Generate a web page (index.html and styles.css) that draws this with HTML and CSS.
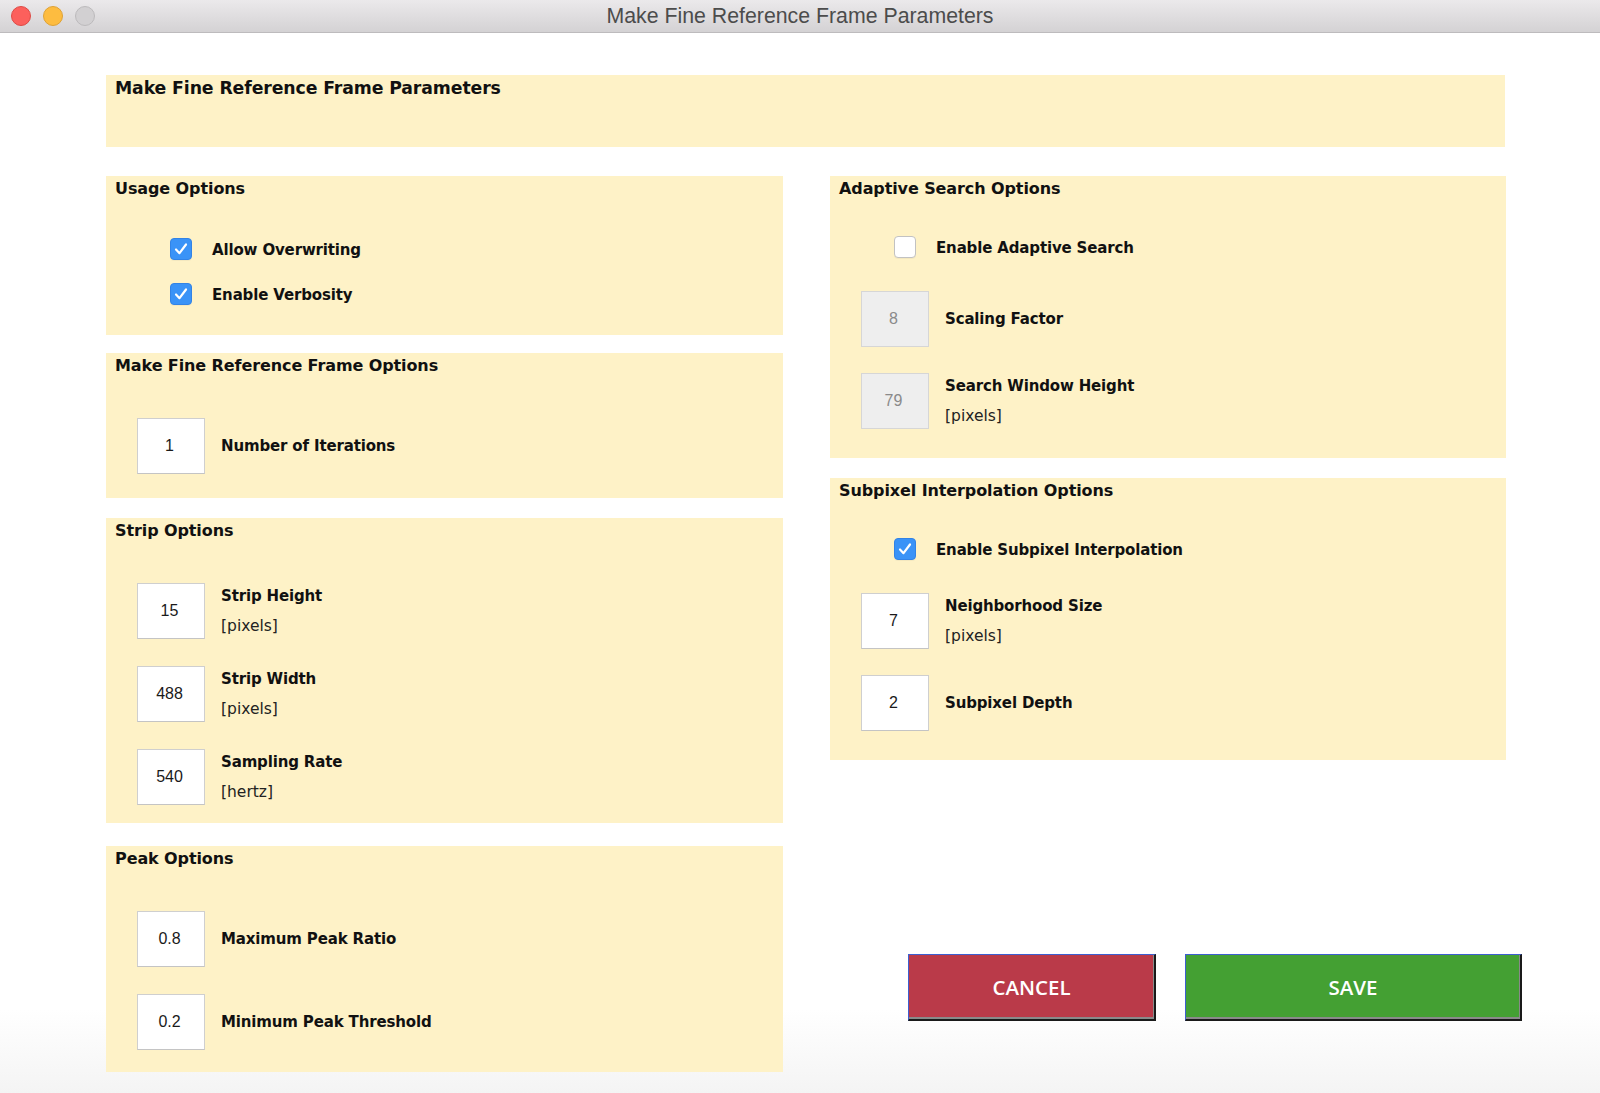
FILE: index.html
```html
<!DOCTYPE html>
<html lang="en">
<head>
<meta charset="utf-8">
<title>Make Fine Reference Frame Parameters</title>
<link rel="stylesheet" href="styles.css">
</head>
<body>
<div class="window">
  <div class="titlebar">
    <div class="lights">
      <span class="light light-red"></span>
      <span class="light light-yellow"></span>
      <span class="light light-gray"></span>
    </div>
    <div class="window-title">Make Fine Reference Frame Parameters</div>
  </div>

  <div class="content">
    <div class="panel panel-header">
      <div class="panel-title">Make Fine Reference Frame Parameters</div>
    </div>

    <div class="columns">
      <div class="col">
        <div class="panel panel-usage">
          <div class="panel-title">Usage Options</div>
          <div class="panel-body body-checks">
            <label class="check-row">
              <span class="checkbox checked"><svg viewBox="0 0 22 22" width="22" height="22"><path d="M6 11.5 L9.5 15.2 L16 6.5" fill="none" stroke="#fff" stroke-width="2.2" stroke-linecap="round" stroke-linejoin="round"/></svg></span>
              <span class="label">Allow Overwriting</span>
            </label>
            <label class="check-row">
              <span class="checkbox checked"><svg viewBox="0 0 22 22" width="22" height="22"><path d="M6 11.5 L9.5 15.2 L16 6.5" fill="none" stroke="#fff" stroke-width="2.2" stroke-linecap="round" stroke-linejoin="round"/></svg></span>
              <span class="label">Enable Verbosity</span>
            </label>
          </div>
        </div>

        <div class="panel panel-mfr">
          <div class="panel-title">Make Fine Reference Frame Options</div>
          <div class="panel-body body-fields">
            <div class="field-row">
              <div class="field">1</div>
              <div class="field-label"><span class="label">Number of Iterations</span></div>
            </div>
          </div>
        </div>

        <div class="panel panel-strip">
          <div class="panel-title">Strip Options</div>
          <div class="panel-body body-fields">
            <div class="field-row">
              <div class="field">15</div>
              <div class="field-label"><span class="label">Strip Height</span><span class="unit">[pixels]</span></div>
            </div>
            <div class="field-row">
              <div class="field">488</div>
              <div class="field-label"><span class="label">Strip Width</span><span class="unit">[pixels]</span></div>
            </div>
            <div class="field-row">
              <div class="field">540</div>
              <div class="field-label"><span class="label">Sampling Rate</span><span class="unit">[hertz]</span></div>
            </div>
          </div>
        </div>

        <div class="panel panel-peak">
          <div class="panel-title">Peak Options</div>
          <div class="panel-body body-fields">
            <div class="field-row">
              <div class="field">0.8</div>
              <div class="field-label"><span class="label">Maximum Peak Ratio</span></div>
            </div>
            <div class="field-row">
              <div class="field">0.2</div>
              <div class="field-label"><span class="label">Minimum Peak Threshold</span></div>
            </div>
          </div>
        </div>
      </div>

      <div class="col">
        <div class="panel panel-adaptive">
          <div class="panel-title">Adaptive Search Options</div>
          <div class="panel-body body-mixed">
            <label class="check-row">
              <span class="checkbox"></span>
              <span class="label">Enable Adaptive Search</span>
            </label>
            <div class="field-row">
              <div class="field disabled">8</div>
              <div class="field-label"><span class="label">Scaling Factor</span></div>
            </div>
            <div class="field-row">
              <div class="field disabled">79</div>
              <div class="field-label"><span class="label">Search Window Height</span><span class="unit">[pixels]</span></div>
            </div>
          </div>
        </div>

        <div class="panel panel-subpixel">
          <div class="panel-title">Subpixel Interpolation Options</div>
          <div class="panel-body body-mixed">
            <label class="check-row">
              <span class="checkbox checked"><svg viewBox="0 0 22 22" width="22" height="22"><path d="M6 11.5 L9.5 15.2 L16 6.5" fill="none" stroke="#fff" stroke-width="2.2" stroke-linecap="round" stroke-linejoin="round"/></svg></span>
              <span class="label">Enable Subpixel Interpolation</span>
            </label>
            <div class="field-row">
              <div class="field">7</div>
              <div class="field-label"><span class="label">Neighborhood Size</span><span class="unit">[pixels]</span></div>
            </div>
            <div class="field-row">
              <div class="field">2</div>
              <div class="field-label"><span class="label">Subpixel Depth</span></div>
            </div>
          </div>
        </div>

        <div class="buttons">
          <button class="btn btn-cancel">CANCEL</button>
          <button class="btn btn-save">SAVE</button>
        </div>
      </div>
    </div>
  </div>
</div>
</body>
</html>
```

FILE: styles.css
```css
* { box-sizing: border-box; }

html, body {
  margin: 0;
  padding: 0;
  width: 1600px;
  height: 1093px;
  overflow: hidden;
  background: #ffffff;
}

.window {
  width: 1600px;
  height: 1093px;
  background: linear-gradient(to bottom, #ffffff 0, #ffffff 1010px, #f4f4f4 1093px);
  font-family: "DejaVu Sans", "Open Sans", sans-serif;
  color: #111;
}

.titlebar {
  position: relative;
  height: 33px;
  background: linear-gradient(to bottom, #ebe9eb, #d4d2d4);
  border-bottom: 1px solid #bdbbbd;
  display: flex;
  align-items: center;
  justify-content: center;
}

.lights {
  position: absolute;
  left: 11px;
  top: 6px;
  display: flex;
  gap: 12px;
}

.light {
  width: 20px;
  height: 20px;
  border-radius: 50%;
  display: block;
}
.light-red { background: #fc605c; border: 1px solid #de4a45; }
.light-yellow { background: #fdbc40; border: 1px solid #dea236; }
.light-gray { background: #d2d0d2; border: 1px solid #bcbabc; }

.window-title {
  font-family: "Liberation Sans", Arial, sans-serif;
  font-size: 21.3px;
  color: #4c4c4c;
  padding-top: 1px;
}

.content {
  padding: 42px 0 0 106px;
}

.panel {
  background: #fef2c7;
}

.panel-title {
  padding: 3px 9px 0;
  font-size: 16px;
  line-height: 20px;
  font-weight: bold;
  color: #111;
  letter-spacing: -0.1px;
}

.panel-header {
  width: 1399px;
  height: 72px;
}
.panel-header .panel-title {
  padding-top: 3px;
  font-size: 17.3px;
}

.columns {
  margin-top: 29px;
  display: grid;
  grid-template-columns: 677px 676px;
  column-gap: 47px;
  align-items: start;
}

.col {
  display: flex;
  flex-direction: column;
}

.panel-usage { height: 159px; }
.panel-mfr { height: 145px; margin-top: 18px; }
.panel-strip { height: 305px; margin-top: 20px; }
.panel-peak { height: 226px; margin-top: 23px; }
.panel-adaptive { height: 282px; }
.panel-subpixel { height: 282px; margin-top: 20px; }

.panel-body {
  display: flex;
  flex-direction: column;
}
.body-checks { margin-top: 39px; gap: 23px; }
.body-fields { margin-top: 42px; gap: 27px; }
.body-mixed { margin-top: 37px; gap: 26px; }
.body-mixed .check-row { margin-bottom: 7px; }

.check-row {
  display: flex;
  align-items: center;
  height: 22px;
  padding-left: 64px;
}

.checkbox {
  width: 22px;
  height: 22px;
  border-radius: 4px;
  background: #ffffff;
  border: 1px solid #c2c2c2;
  box-shadow: 0 1px 0 rgba(0,0,0,0.04);
  display: block;
  flex: none;
}
.checkbox.checked {
  background: #3a93f7;
  border: 1px solid #3283e6;
}
.checkbox svg {
  display: block;
  margin: -1px;
}

.label {
  font-size: 15px;
  font-weight: bold;
  line-height: 30px;
  letter-spacing: -0.15px;
  color: #111;
}

.check-row .label {
  margin-left: 20px;
  margin-top: 1px;
}

.field-row {
  display: flex;
  align-items: center;
  height: 56px;
  padding-left: 31px;
}

.field {
  width: 68px;
  height: 56px;
  flex: none;
  background: #ffffff;
  border: 1px solid #cfcfcf;
  border-bottom-color: #c4c4c4;
  display: flex;
  align-items: center;
  justify-content: center;
  font-family: "Liberation Sans", Arial, sans-serif;
  font-size: 16px;
  color: #1a1a1a;
  padding-right: 3px;
}
.field.disabled {
  background: #eeeeee;
  color: #8a8a8a;
  border-color: #d6d6d6;
}

.field-label {
  margin-left: 16px;
  display: flex;
  flex-direction: column;
}

.unit {
  font-size: 15.5px;
  line-height: 30px;
  font-weight: normal;
  color: #222;
}

.buttons {
  margin-top: 194px;
  margin-left: 78px;
  display: flex;
  gap: 29px;
}

.btn {
  flex: none;
  height: 67px;
  border-style: solid;
  border-width: 1px 2px 2px 1px;
  border-color: #3d5fd0 #1a1a1a #1a1a1a #3d5fd0;
  box-shadow: inset -1px -2px 0 #8a8a8a;
  color: #ffffff;
  font-family: "Open Sans", "Lato", sans-serif;
  font-weight: 600;
  font-size: 20.5px;
  padding: 0;
  margin: 0;
}
.btn-cancel { width: 248px; background: #ba3a49; }
.btn-save { width: 337px; background: #44a033; }
```
